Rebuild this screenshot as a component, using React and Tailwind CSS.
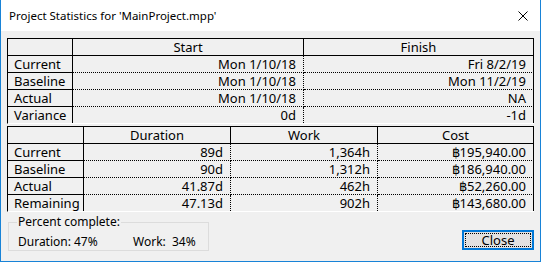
import React from 'react';

const startRows = [
  { label: 'Current', start: 'Mon 1/10/18', finish: 'Fri 8/2/19' },
  { label: 'Baseline', start: 'Mon 1/10/18', finish: 'Mon 11/2/19' },
  { label: 'Actual', start: 'Mon 1/10/18', finish: 'NA' },
  { label: 'Variance', start: '0d', finish: '-1d' },
];

const workRows = [
  { label: 'Current', duration: '89d', work: '1,364h', cost: '฿195,940.00' },
  { label: 'Baseline', duration: '90d', work: '1,312h', cost: '฿186,940.00' },
  { label: 'Actual', duration: '41.87d', work: '462h', cost: '฿52,260.00' },
  { label: 'Remaining', duration: '47.13d', work: '902h', cost: '฿143,680.00' },
];

// header cell: solid lines both sides
const Head = ({ children }) => (
  <div className="h-[17px] flex items-center justify-center border-b border-r border-black">
    {children}
  </div>
);

const Label = ({ children, bottom }) => (
  <div className={`flex items-center pl-[6px] border-r border-black whitespace-nowrap ${bottom ? 'h-[16px]' : 'h-[17px] border-b'}`}>
    {children}
  </div>
);

const Value = ({ children, bottom, last }) => (
  <div
    className={`flex items-center justify-end pr-[7px] whitespace-nowrap ${
      last ? 'border-r border-solid border-black' : 'border-r border-dotted border-black'
    } ${bottom ? 'h-[16px]' : 'h-[17px] border-b border-b-black [border-bottom-style:dotted]'}`}
  >
    {children}
  </div>
);

const CloseIcon = () => (
  <svg width="10" height="10" viewBox="0 0 10 10" className="block mt-[1px]">
    <path d="M0.5 0.5 L9.5 9.5 M9.5 0.5 L0.5 9.5" stroke="#000" strokeWidth="1" fill="none" />
  </svg>
);

export default function App() {
  return (
    <div className="w-[541px] h-[262px] flex flex-col bg-[#f0f0f0] border border-t-0 border-[#1883d7] font-['Segoe_UI','Noto_Sans',sans-serif] text-[13px] leading-[16px] text-black overflow-hidden">
      {/* Title bar */}
      <div className="h-[31px] shrink-0 bg-white flex items-center justify-between pl-[8px] pr-[12px] text-[11.5px]">
        <span>Project Statistics for 'MainProject.mpp'</span>
        <CloseIcon />
      </div>

      <div className="flex flex-col px-[6px] pt-[7px]">
        {/* Start / Finish */}
        <div className="grid grid-cols-[65px_231px_230px] border-t border-l border-black border-b border-b-white w-[527px]">
          <Head />
          <Head>Start</Head>
          <Head>Finish</Head>
          {startRows.map((r, i) => {
            const bottom = i === startRows.length - 1;
            return (
              <React.Fragment key={r.label}>
                <Label bottom={bottom}>{r.label}</Label>
                <Value bottom={bottom}>{r.start}</Value>
                <Value bottom={bottom} last>{r.finish}</Value>
              </React.Fragment>
            );
          })}
        </div>

        {/* Duration / Work / Cost */}
        <div className="mt-[2px] grid grid-cols-[76px_147px_147px_156px] border-t border-l border-black border-b border-b-white w-[527px]">
          <Head />
          <Head>Duration</Head>
          <Head>Work</Head>
          <Head>Cost</Head>
          {workRows.map((r, i) => {
            const bottom = i === workRows.length - 1;
            return (
              <React.Fragment key={r.label}>
                <Label bottom={bottom}>{r.label}</Label>
                <Value bottom={bottom}>{r.duration}</Value>
                <Value bottom={bottom}>{r.work}</Value>
                <Value bottom={bottom} last>{r.cost}</Value>
              </React.Fragment>
            );
          })}
        </div>

        <div className="flex items-end justify-between mt-[2px] pl-[1px]">
          <fieldset className="w-[201px] h-[37px] border border-[#dcdcdc] pl-[9px] pr-2 text-[12px]">
            <legend className="px-[1px] -ml-[1px]">Percent complete:</legend>
            <div className="flex mt-[4px]">
              <span className="w-[56px]">Duration:</span>
              <span className="w-[59px]">47%</span>
              <span className="w-[39px]">Work:</span>
              <span>34%</span>
            </div>
          </fieldset>

          <button className="w-[72px] h-[20px] mb-[1px] p-[1px] bg-[#e1e1e1] border-2 border-[#0078d7]">
            <div className="h-full w-full border border-dotted border-black flex items-center justify-center leading-none">
              Close
            </div>
          </button>
        </div>
      </div>
    </div>
  );
}
